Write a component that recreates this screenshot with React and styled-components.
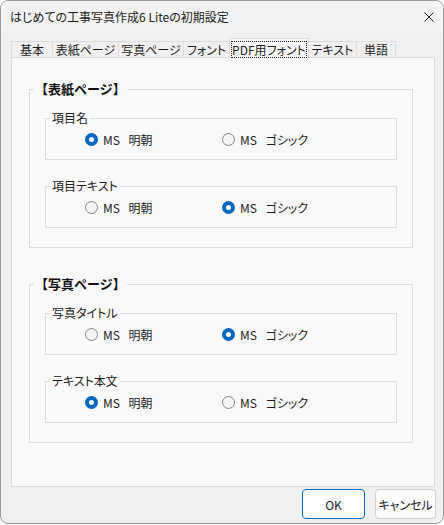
import React from 'react';
import styled, { createGlobalStyle, css } from 'styled-components';

const GlobalStyle = createGlobalStyle`
  html, body {
    margin: 0;
    padding: 0;
    background: #ffffff;
  }
  body {
    font-family: "Noto Sans CJK JP", "Noto Sans", sans-serif;
    font-size: 12px;
    color: #1b1b1b;
  }
`;

const tabs = [
  { label: '基本', w: 41 },
  { label: '表紙ページ', w: 66 },
  { label: '写真ページ', w: 65 },
  { label: 'フォント', w: 46 },
  { label: 'PDF用フォント', w: 80, active: true },
  { label: 'テキスト', w: 47 },
  { label: '単語', w: 40 },
];

const sections = [
  {
    title: '【表紙ページ】',
    items: [
      { label: '項目名', value: 0 },
      { label: '項目テキスト', value: 1 },
    ],
  },
  {
    title: '【写真ページ】',
    items: [
      { label: '写真タイトル', value: 1 },
      { label: 'テキスト本文', value: 0 },
    ],
  },
];

const options = ['MS 明朝', 'MS ゴシック'];

const App = () => {
  return (
    <>
      <GlobalStyle />
      <Window>
        <TitleBar>
          <span>はじめての工事写真作成6 Liteの初期設定</span>
          <svg width="10" height="10" viewBox="0 0 10 10">
            <path d="M0.5 0.5 L9.5 9.5 M9.5 0.5 L0.5 9.5" stroke="#1b1b1b" strokeWidth="1" fill="none" />
          </svg>
        </TitleBar>
        <Body>
          <TabRow>
            {tabs.map((t, i) => (
              <Tab key={t.label} $w={t.w} $active={t.active} $last={i === tabs.length - 1}>
                {t.active ? <Focus>{t.label}</Focus> : t.label}
              </Tab>
            ))}
          </TabRow>
          <Panel>
            {sections.map(s => (
              <Group key={s.title}>
                <GroupTitle>{s.title}</GroupTitle>
                {s.items.map(item => (
                  <SubGroup key={item.label}>
                    <SubTitle>{item.label}</SubTitle>
                    <RadioRow>
                      {options.map((o, idx) => (
                        <Option key={o}>
                          <Radio $checked={item.value === idx} />
                          <span>{o}</span>
                        </Option>
                      ))}
                    </RadioRow>
                  </SubGroup>
                ))}
              </Group>
            ))}
          </Panel>
          <Footer>
            <Button $w={63} $primary>OK</Button>
            <Button $w={61}>キャンセル</Button>
          </Footer>
        </Body>
      </Window>
    </>
  );
};

const Window = styled.div`
  box-sizing: border-box;
  width: 444px;
  height: 524px;
  border: 1px solid #9a9a9a;
  border-radius: 8px;
  background: #f0f0f0;
  display: flex;
  flex-direction: column;
  overflow: hidden;
  font-feature-settings: "palt";
`;

const TitleBar = styled.div`
  height: 31px;
  display: flex;
  align-items: center;
  justify-content: space-between;
  padding: 0 9px 0 9px;
  background: #f3f3f3;
  font-size: 12px;
`;

const Body = styled.div`
  flex: 1;
  display: flex;
  flex-direction: column;
  padding: 6px 8px 4px 10px;
`;

const TabRow = styled.div`
  display: flex;
  align-items: flex-end;
  height: 19px;
  position: relative;
  z-index: 1;
`;

const Tab = styled.div`
  box-sizing: border-box;
  width: ${p => p.$w}px;
  height: 16px;
  display: flex;
  align-items: center;
  justify-content: center;
  line-height: 14px;
  white-space: nowrap;
  background: #f0f0f0;
  border-top: 1px solid #dcdcdc;
  border-left: 1px solid #dcdcdc;
  border-right: ${p => (p.$last ? '1px solid #dcdcdc' : 'none')};
  ${p =>
    p.$active &&
    css`
      height: 20px;
      margin-bottom: -1px;
      align-items: flex-start;
      background: #f9f9f9;
      border-right: 1px solid #dcdcdc;
      & + div {
        border-left: none;
      }
    `}
`;

const Focus = styled.span`
  box-sizing: border-box;
  flex: 1;
  margin: 2px 1px 0;
  height: 17px;
  border: 1px dotted #1b1b1b;
  display: flex;
  align-items: center;
  justify-content: center;
`;

const Panel = styled.div`
  box-sizing: border-box;
  height: 430px;
  border: 1px solid #dcdcdc;
  background: #f9f9f9;
  padding: 23px 21px 0 17px;
`;

const Group = styled.fieldset`
  margin: 0;
  min-width: 0;
  border: 1px solid #dcdcdc;
  padding: 13px 15px 19px;
  & + & {
    margin-top: 28px;
  }
`;

const GroupTitle = styled.legend`
  font-weight: bold;
  font-size: 13px;
  line-height: 16px;
  padding: 0 1px;
  margin-left: -11px;
  color: #111;
  font-feature-settings: normal;
`;

const SubGroup = styled.fieldset`
  margin: 0;
  min-width: 0;
  border: 1px solid #dcdcdc;
  padding: 3px 0 10px 4px;
  & + & {
    margin-top: 18px;
  }
`;

const SubTitle = styled.legend`
  font-size: 12px;
  line-height: 16px;
  padding: 0 2px;
`;

const RadioRow = styled.div`
  display: grid;
  grid-template-columns: 137px 137px;
  height: 20px;
  align-items: center;
  padding-left: 35px;
`;

const Option = styled.label`
  display: flex;
  align-items: center;
  gap: 5px;
  font-size: 12px;
  white-space: nowrap;
  word-spacing: 6px;
`;

const Radio = styled.span`
  box-sizing: border-box;
  width: 13px;
  height: 13px;
  border-radius: 50%;
  flex: none;
  ${p =>
    p.$checked
      ? css`
          border: 4px solid #0067c0;
          background: #ffffff;
        `
      : css`
          border: 1px solid #858585;
          background: #f5f5f5;
        `}
`;

const Footer = styled.div`
  display: flex;
  justify-content: flex-end;
  gap: 10px;
  margin-top: 2px;
  margin-right: -1px;
`;

const Button = styled.button`
  box-sizing: border-box;
  width: ${p => p.$w}px;
  height: 30px;
  padding: 0;
  border: 1px solid ${p => (p.$primary ? '#0067c0' : '#d0d0d0')};
  border-radius: 4px;
  background: #fdfdfd;
  font: inherit;
  font-size: 12px;
  color: #1b1b1b;
`;

export default App;
